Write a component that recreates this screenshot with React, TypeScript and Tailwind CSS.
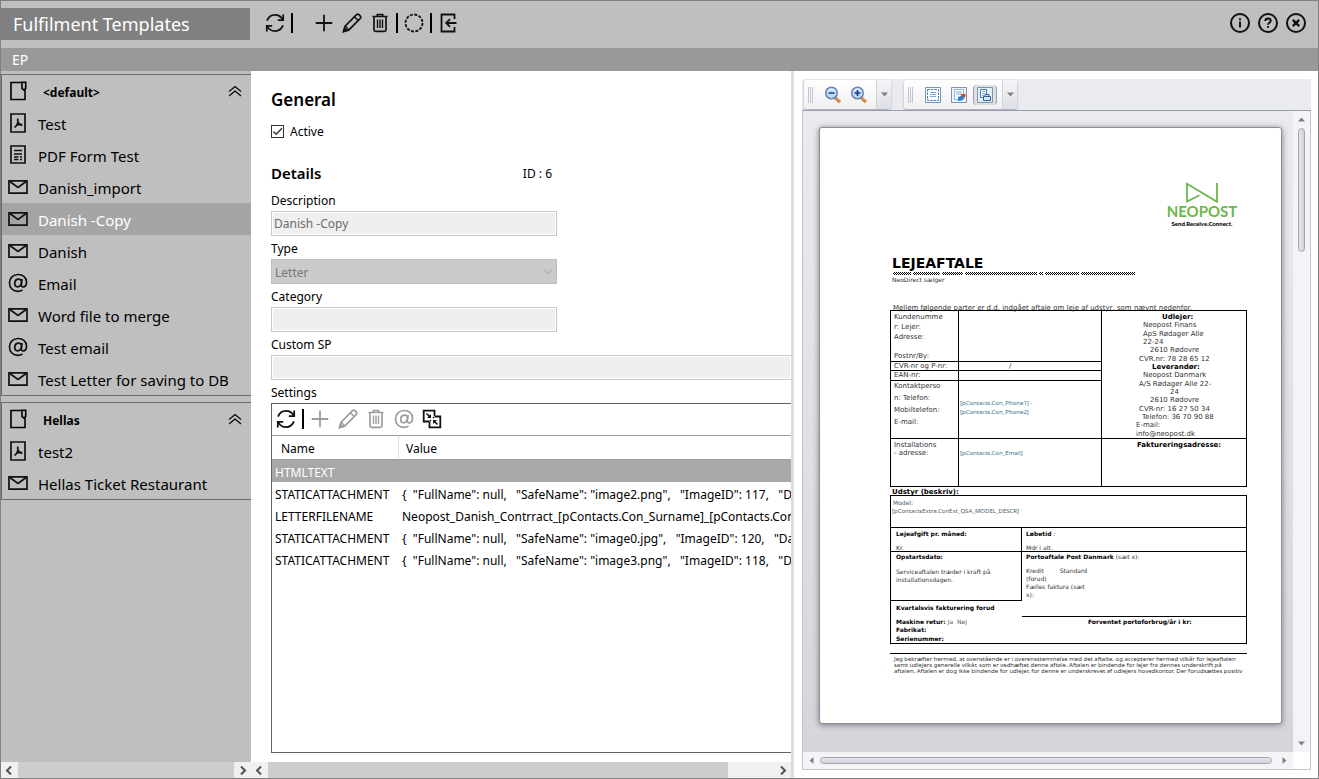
import React from "react";

type IconProps = { className?: string };

const svgBase = {
  fill: "none",
  stroke: "currentColor",
  strokeWidth: 1.8,
  "aria-hidden": true,
} as const;

function RefreshIcon() {
  return (
    <svg width="20" height="20" viewBox="0 0 20 20" {...svgBase}>
      <path d="M2 7.6C3.6 3.6 6.6 1.9 10 1.9c3.4 0 6.2 1.900 7.900 5" />
      <path d="M18.200 1.600v5.600h-5.400" />
      <path d="M18 12.400c-1.600 4-4.600 5.700-8 5.700-3.400 0-6.200-1.900-7.900-5" />
      <path d="M1.800 18.400v-5.600h5.400" />
    </svg>
  );
}

function PlusIcon() {
  return (
    <svg width="20" height="20" viewBox="0 0 20 20" {...svgBase}>
      <path d="M10 1.700v16.600M1.700 10h16.600" />
    </svg>
  );
}

function PencilIcon() {
  return (
    <svg width="20" height="20" viewBox="0 0 20 20" {...svgBase} strokeWidth={1.700}>
      <path d="M1.600 18.400l1.500-5.300L14.300 1.900c1-.9 2.100-.8 2.900 0l.9.9c.8.8.9 1.900 0 2.900L6.900 16.900z" />
      <path d="M12.400 3.800l3.800 3.800M3.100 13.100l3.800 3.800" strokeWidth={1.400} />
      <path d="M1.600 18.400l.9-3 2.100 2.100z" fill="currentColor" />
    </svg>
  );
}

function TrashIcon() {
  return (
    <svg width="20" height="20" viewBox="0 0 20 20" {...svgBase} strokeWidth={1.700}>
      <path d="M2.500 3.500h15M7.300 3.300V1.500h5.400v1.800M4 3.500v13.200c0 1 .6 1.600 1.600 1.600h8.800c1 0 1.600-.6 1.600-1.600V3.500" />
      <path d="M7.500 6.500v8.500M10 6.500v8.500M12.500 6.500v8.500" strokeWidth={1.400} />
    </svg>
  );
}

function DashedCircleIcon() {
  return (
    <svg width="20" height="20" viewBox="0 0 20 20" {...svgBase}>
      <circle cx="10" cy="10" r="8.500" strokeDasharray="3 1.450" />
    </svg>
  );
}

function ExitIcon() {
  return (
    <svg width="20" height="20" viewBox="0 0 20 20" {...svgBase}>
      <path d="M16.500 6V1.500h-13v17h13V14" />
      <path d="M18.500 10H8.500M12 6.200L8.200 10l3.800 3.800" />
    </svg>
  );
}

function AtIcon() {
  return (
    <svg width="20" height="20" viewBox="0 0 20 20" {...svgBase} strokeWidth={1.700}>
      <path d="M14.500 16.900c-1.300.9-2.800 1.400-4.600 1.400-5 0-8.400-3.400-8.400-8.300 0-4.900 3.600-8.500 8.700-8.500 4.800 0 8.300 3 8.300 7.500 0 3.100-1.500 4.900-3.400 4.900-1.300 0-2-.8-1.800-2.300l.8-5.600" />
      <path d="M13.600 8.800c-.3-1.700-1.300-2.600-2.900-2.600-2.400 0-4 1.900-4 4.400 0 2 1 3.200 2.700 3.200 2 0 3.700-1.600 4.100-4.100" />
    </svg>
  );
}

function MergeIcon() {
  return (
    <svg width="20" height="20" viewBox="0 0 20 20" {...svgBase}>
      <path d="M7.500 12.500H1.700V1.700h10.800v5M12.500 7.500h5.800v10.800H7.500v-5.800" />
      <path d="M4.500 4.500l3.300 3.300M15.500 15.500l-3.600-3.600" strokeWidth={1.500} />
      <path d="M12 8l-1 1M9 11l-1 1" strokeWidth={1.200} />
      <path d="M9 5v4H5zM11 15v-4h4z" fill="currentColor" stroke="none" />
    </svg>
  );
}

function InfoIcon() {
  return (
    <svg width="20" height="20" viewBox="0 0 20 20" {...svgBase} strokeWidth={2}>
      <circle cx="10" cy="10" r="9" />
      <path d="M10 8.500v6M10 5.300v2" />
    </svg>
  );
}

function HelpIcon() {
  return (
    <svg width="20" height="20" viewBox="0 0 20 20" {...svgBase} strokeWidth={2}>
      <circle cx="10" cy="10" r="9" />
      <path d="M7.300 8c.1-1.600 1.200-2.500 2.700-2.500 1.600 0 2.700.9 2.700 2.200 0 2-2.700 2-2.700 4.100M10 12.900v1.900" />
    </svg>
  );
}

function CloseIcon() {
  return (
    <svg width="20" height="20" viewBox="0 0 20 20" {...svgBase} strokeWidth={2}>
      <circle cx="10" cy="10" r="9" />
      <path d="M6.800 6.800l6.400 6.400M13.200 6.800l-6.400 6.400" strokeWidth={2.400} />
    </svg>
  );
}

function FolderIcon() {
  return (
    <svg width="20" height="20" viewBox="0 0 20 20" {...svgBase} strokeWidth={1.600}>
      <path d="M14 1.500H3v17h14V9M14 1.200h3.700v6.500L15.900 9 14 7.700z" />
    </svg>
  );
}

function PdfIcon() {
  return (
    <svg width="20" height="20" viewBox="0 0 20 20" {...svgBase} strokeWidth={1.700}>
      <path d="M3 1h14v18H3z" />
      <path d="M9.600 5.500c.6 2.700.6 3.700-.5 5.900-.9 1.800-1.800 2.800-2.700 2.900M9.700 8.500c1 2.300 2.400 3.500 4.600 3.900M8.400 12.200c2-.8 3.800-1 5.800-.6" />
    </svg>
  );
}

function FormIcon() {
  return (
    <svg width="20" height="20" viewBox="0 0 20 20" {...svgBase} strokeWidth={1.700}>
      <path d="M3 1h14v17H3z" />
      <path d="M6 5.500h8M6 9h8M6 12h4.500M12 12h2M6 14.500h4.500M12 14.500h2" strokeWidth={1.400} />
    </svg>
  );
}

function MailIcon() {
  return (
    <svg width="20" height="20" viewBox="0 0 20 20" {...svgBase} strokeWidth={1.700}>
      <path d="M1 3.800h18v12.400H1z" />
      <path d="M1.500 4.200L10 10.500l8.500-6.300" />
    </svg>
  );
}

function CollapseIcon() {
  return (
    <svg width="14" height="12" viewBox="0 0 14 12" {...svgBase} strokeWidth={1.100}>
      <path d="M1 6.500l6-5 6 5M1 11l6-5 6 5" />
    </svg>
  );
}

function MagnifierIcon({ plus }: { plus?: boolean }) {
  return (
    <svg width="18" height="18" viewBox="0 0 18 18" fill="none" aria-hidden>
      <path d="M11 11.500l5 4.700" stroke="#c9772b" strokeWidth="3" />
      <path d="M11.500 11.500l4.500 4.200" stroke="#f2b466" strokeWidth="1" />
      <circle cx="7.500" cy="7" r="5.800" fill="#b9dcf8" stroke="#6d83b3" strokeWidth="1.500" />
      <path d="M4 5.500a4 4 0 0 1 7 0" stroke="#eaf6ff" strokeWidth="1.200" />
      <path d={plus ? "M4.500 7h6M7.500 4v6" : "M4.500 7h6"} stroke="#1d3c8f" strokeWidth="1.700" />
    </svg>
  );
}

function PageFrameIcon() {
  return (
    <svg width="16" height="16" viewBox="0 0 16 16" fill="none" aria-hidden>
      <path d="M.5.500h15v15H.5z" fill="#fff" stroke="#7f93ad" />
      <path d="M2.500 2.500h11v11h-11z" stroke="#3d7ccc" strokeDasharray="2.500 1" />
      <path d="M5 5.500h6M5 7.500h6M5 9.500h6" stroke="#7fa8dc" />
    </svg>
  );
}

function PageColorIcon() {
  return (
    <svg width="16" height="16" viewBox="0 0 16 16" fill="none" aria-hidden>
      <path d="M.5.500h15v15H.5z" fill="#eef6fd" stroke="#7f93ad" />
      <path d="M3.500 2.500h9v10h-9z" fill="#fff" stroke="#8db7e4" />
      <path d="M5 5h6M5 7h5" stroke="#7fa8dc" />
      <path d="M7 10l4-1.500 3 1-3 4-4 .5z" fill="#2f7fd0" />
      <path d="M9 7.500l4-1 2 1.500-1.500 3-2.500-2z" fill="#d0492a" />
    </svg>
  );
}

function PagePrintIcon() {
  return (
    <svg width="16" height="16" viewBox="0 0 16 16" fill="none" aria-hidden>
      <path d="M.5.500h15v15H.5z" fill="#e6eef6" stroke="#7f93ad" />
      <path d="M3.500 2.500h6v8h-6z" fill="#fff" stroke="#3d7ccc" />
      <path d="M5 4.500h3M5 6.500h3M5 8.500h2" stroke="#7fa8dc" />
      <path d="M6.500 9.500h7v4h-7zM8 7.500h4v2H8z" fill="#dbe9f7" stroke="#2e5f9e" />
    </svg>
  );
}

function Logo() {
  return (
    <div className="flex w-[80px] flex-col items-center">
      <svg width="34" height="22" viewBox="0 0 34 22" fill="none" stroke="#6cb74b" strokeWidth="1.800" role="img" aria-label="Neopost logo">
        <path d="M14.500 14.200L2 20.500V2.800l30 18V2" />
      </svg>
      <div className="font-['Lato',sans-serif] text-[15px] leading-[16px] font-bold text-[#6cb74b]">NEOPOST</div>
      <div className="font-['Lato',sans-serif] text-[6px] leading-[9px] font-black text-black">Send.Receive.Connect.</div>
    </div>
  );
}

function IconButton({ label, disabled, children }: { label: string; disabled?: boolean; children: React.ReactNode }) {
  return (
    <button
      type="button"
      aria-label={label}
      disabled={disabled}
      className="flex h-7 w-7 shrink-0 items-center justify-center text-[#111] disabled:text-[#9d9d9d]"
    >
      {children}
    </button>
  );
}

function Separator() {
  return <span className="mx-0.5 h-5 w-0.5 shrink-0 bg-black" />;
}

type Kind = "pdf" | "form" | "mail" | "email";

const kindIcons: Record<Kind, () => React.JSX.Element> = {
  pdf: PdfIcon,
  form: FormIcon,
  mail: MailIcon,
  email: AtIcon,
};

const groups: { name: string; items: { kind: Kind; name: string; selected?: boolean }[] }[] = [
  {
    name: "<default>",
    items: [
      { kind: "pdf", name: "Test" },
      { kind: "form", name: "PDF Form Test" },
      { kind: "mail", name: "Danish_import" },
      { kind: "mail", name: "Danish -Copy", selected: true },
      { kind: "mail", name: "Danish" },
      { kind: "email", name: "Email" },
      { kind: "mail", name: "Word file to merge" },
      { kind: "email", name: "Test email" },
      { kind: "mail", name: "Test Letter for saving to DB" },
    ],
  },
  {
    name: "Hellas",
    items: [
      { kind: "pdf", name: "test2" },
      { kind: "mail", name: "Hellas Ticket Restaurant" },
    ],
  },
];

const settings = [
  { name: "HTMLTEXT", value: "", selected: true },
  { name: "STATICATTACHMENT", value: '{  "FullName": null,   "SafeName": "image2.png",   "ImageID": 117,   "Data": null }' },
  { name: "LETTERFILENAME", value: "Neopost_Danish_Contrract_[pContacts.Con_Surname]_[pContacts.Con_ID]" },
  { name: "STATICATTACHMENT", value: '{  "FullName": null,   "SafeName": "image0.jpg",   "ImageID": 120,   "Data": null }' },
  { name: "STATICATTACHMENT", value: '{  "FullName": null,   "SafeName": "image3.png",   "ImageID": 118,   "Data": null }' },
];

function Sidebar() {
  return (
    <nav className="flex min-h-0 flex-1 flex-col gap-1.5 overflow-hidden bg-[#bfbfbf] pt-[3px]">
      {groups.map((group) => (
        <section key={group.name} className="border border-r-0 border-[#6b6b6b]">
          <button type="button" className="flex h-8 w-full items-center pr-[9px] pl-1.5 text-left">
            <FolderIcon />
            <span className="ml-[15px] flex-1 pt-[3px] text-[12px] font-bold">{group.name}</span>
            <CollapseIcon />
          </button>
          {group.items.map((item) => {
            const Icon = kindIcons[item.kind];
            return (
              <button
                key={item.name}
                type="button"
                className={
                  item.selected
                    ? "flex h-8 w-full items-center gap-2.5 bg-[#a5a5a5] pl-1.5 text-left text-[15px] text-white"
                    : "flex h-8 w-full items-center gap-2.5 pl-1.5 text-left text-[15px] text-black"
                }
              >
                <span className="text-[#111]">
                  <Icon />
                </span>
                <span className="pt-[3px] whitespace-nowrap">{item.name}</span>
              </button>
            );
          })}
        </section>
      ))}
    </nav>
  );
}

function ChevronSmall({ left }: { left?: boolean }) {
  return (
    <svg width="17" height="9" viewBox="0 0 17 9" fill="none" stroke="#505050" strokeWidth="2" aria-hidden>
      <path d={left ? "M10 .5l-4 4 4 4" : "M7 .5l4 4-4 4"} />
    </svg>
  );
}

function FlatScrollbar({ thumb }: { thumb: string }) {
  return (
    <div className="flex h-4 shrink-0 items-center bg-[#f0f0f0]">
      <ChevronSmall left />
      <div className="flex h-full flex-1">
        <div className={thumb} />
      </div>
      <ChevronSmall />
    </div>
  );
}

const labelClass = "flex h-[23px] items-center pt-0.5";
const inputClass =
  "block h-[25px] border border-[#c9c9c9] bg-[#efefef] px-0.5 text-[12px] text-[#6d6d6d] shadow-[inset_0_0_0_1px_#fff] outline-none";

function TemplateForm() {
  return (
    <div className="flex min-h-0 flex-1 flex-col overflow-hidden bg-white pt-3.5 pb-[9px] pl-5 text-[12px]">
      <h2 className="flex h-7 items-center pt-0.5 text-[17px] font-semibold">General</h2>
      <label className="mt-2 flex h-5 items-center gap-1.5">
        <span className="relative h-[13px] w-[13px]">
          <input type="checkbox" defaultChecked className="peer block h-[13px] w-[13px] appearance-none border border-[#333] bg-white" />
          <svg className="pointer-events-none absolute inset-0 hidden peer-checked:block" width="13" height="13" viewBox="0 0 13 13" fill="none" stroke="#333" strokeWidth="1.400">
            <path d="M2.500 6.500l2.700 2.800L11 3.200" />
          </svg>
        </span>
        <span className="pt-0.5">Active</span>
      </label>
      <div className="mt-5 flex h-6 w-[286px] shrink-0 items-center justify-between pr-[5px]">
        <h2 className="text-[15px] font-semibold">Details</h2>
        <span className="pt-0.5">ID : 6</span>
      </div>
      <div className="mt-[3px] shrink-0">
        <label htmlFor="description" className={labelClass}>Description</label>
        <input id="description" readOnly defaultValue="Danish -Copy" className={`${inputClass} w-[286px]`} />
        <label htmlFor="type" className={labelClass}>Type</label>
        <div className="relative w-[286px]">
          <select id="type" disabled className="block h-[25px] w-full appearance-none border border-[#bdbdbd] bg-[#cbcbcb] px-[3px] pt-0.5 text-[12px] text-[#777] opacity-100">
            <option>Letter</option>
          </select>
          <svg className="pointer-events-none absolute top-2.5 right-1" width="10" height="6" viewBox="0 0 10 6" fill="none" stroke="#9b9b9b">
            <path d="M1 .5l4 4 4-4" />
          </svg>
        </div>
        <label htmlFor="category" className={labelClass}>Category</label>
        <input id="category" readOnly className={`${inputClass} w-[286px]`} />
        <label htmlFor="custom-sp" className={labelClass}>Custom SP</label>
        <input id="custom-sp" readOnly className={`${inputClass} w-full border-r-0`} />
        <div className={labelClass}>Settings</div>
      </div>
      <div className="flex min-h-0 flex-1 flex-col overflow-hidden border border-r-0 border-[#646464]">
        <div className="flex h-[31px] shrink-0 items-center pb-px">
          <IconButton label="Refresh settings"><RefreshIcon /></IconButton>
          <Separator />
          <IconButton label="Add setting" disabled><PlusIcon /></IconButton>
          <IconButton label="Edit setting" disabled><PencilIcon /></IconButton>
          <IconButton label="Delete setting" disabled><TrashIcon /></IconButton>
          <IconButton label="Email setting" disabled><AtIcon /></IconButton>
          <IconButton label="Merge"><MergeIcon /></IconButton>
        </div>
        <table className="w-full table-fixed border-separate border-spacing-0 text-left whitespace-pre">
          <colgroup>
            <col className="w-[127px]" />
            <col />
          </colgroup>
          <thead>
            <tr className="h-[25px]">
              <th className="border-y border-r border-y-[#999] border-r-[#dcdcdc] pt-0.5 pl-[9px] font-normal">Name</th>
              <th className="border-y border-[#999] pt-0.5 pl-[7px] font-normal">Value</th>
            </tr>
          </thead>
          <tbody>
            {settings.map((row, i) => (
              <tr key={i} className={row.selected ? "h-[22px] bg-[#a8a8a8] text-white" : "h-[22px]"}>
                <td className="pt-1 pl-[3px] leading-4">{row.name}</td>
                <td className="overflow-hidden pt-1 pl-[3px] leading-4">{row.value}</td>
              </tr>
            ))}
          </tbody>
        </table>
      </div>
    </div>
  );
}

function Triangle({ className }: IconProps) {
  return (
    <svg className={className} width="7" height="5" viewBox="0 0 7 5" fill="#7d8090" aria-hidden>
      <path d="M0 .5h7L3.500 4.500z" />
    </svg>
  );
}

function ToolGroup({ children }: { children: React.ReactNode }) {
  return (
    <div className="flex h-[29px] overflow-hidden rounded-[3px] bg-linear-to-b from-white to-[#f0f0f4] shadow-[0_1px_2px_#9a9cab]">
      <div className="ml-1 flex items-center gap-px">
        <span className="h-4 w-px bg-[#c4c6ce]" />
        <span className="h-4 w-px bg-[#c4c6ce]" />
        <span className="h-4 w-px bg-[#c4c6ce]" />
      </div>
      {children}
      <button type="button" aria-label="More options" className="flex w-[15px] items-center justify-center border-l border-[#cfd0d8] bg-linear-to-b from-[#f6f6f9] to-[#dedfe6]">
        <Triangle />
      </button>
    </div>
  );
}

function ToolButton({ label, pressed, children }: { label: string; pressed?: boolean; children: React.ReactNode }) {
  return (
    <button
      type="button"
      aria-label={label}
      className={
        pressed
          ? "flex w-6 items-center justify-center self-center rounded-sm border-x border-[#9b9dab] bg-[#dfe0e6] py-0.5"
          : "flex w-6 items-center justify-center self-center py-0.5"
      }
    >
      {children}
    </button>
  );
}

const supplierLines: { text: string; style: string }[] = [
  { text: "Udlejer:", style: "pl-[60px] font-bold text-black" },
  { text: "Neopost Finans", style: "pl-[41px]" },
  { text: "ApS Rødager Alle", style: "pl-[41px]" },
  { text: "22-24", style: "pl-[41px]" },
  { text: "2610 Rødovre", style: "pl-[48px]" },
  { text: "CVR.nr: 78 28 65 12", style: "pl-[37px]" },
  { text: "Leverandør:", style: "pl-[50px] font-bold text-black" },
  { text: "Neopost Danmark", style: "pl-[41px]" },
  { text: "A/S Rødager Alle 22-", style: "pl-[37px]" },
  { text: "24", style: "pl-[68px]" },
  { text: "2610 Rødovre", style: "pl-[48px]" },
  { text: "CVR-nr: 16 27 50 34", style: "pl-[37px]" },
  { text: "Telefon: 36 70 90 88", style: "pl-[40px]" },
  { text: "E-mail:", style: "pl-[34px]" },
  { text: "info@neopost.dk", style: "pl-[34px]" },
];

const ruleSegments = ["w-[18px]", "w-[27px]", "w-[21px]", "w-[72px]", "w-1", "w-[34px]", "w-[54px]"];

const cell = "border border-black p-0 pl-[3px] align-top";
const fieldCell = "border border-black p-0 pl-px align-top font-['Noto_Sans',sans-serif] text-[6px] text-[#356f8c]";

function DocumentPage() {
  return (
    <article className="h-[597px] w-[463px] shrink-0 rounded-[3px] border border-[#8d8d92] bg-white pr-[34px] pl-[70px] font-['DejaVu_Sans',sans-serif] text-[7px] leading-[8px] text-[#333] shadow-[0_1px_6px_#777a85]">
      <div className="flex h-[127px] justify-end pt-[53px] pr-[5px]">
        <Logo />
      </div>
      <h1 className="pl-0.5 text-[14px] leading-[16px] font-bold text-black">LEJEAFTALE</h1>
      <div className="mt-px flex gap-[2px] pl-[3px]">
        {ruleSegments.map((w, i) => (
          <span key={i} className={`h-[3px] bg-[repeating-conic-gradient(#000_0_25%,#fff_0_50%)] bg-[length:2px_2px] ${w}`} />
        ))}
      </div>
      <p className="mt-px pl-0.5 text-[6px]">NeoDirect sælger</p>
      <p className="mt-5 h-[6px] overflow-visible pl-[3px] whitespace-nowrap">
        Mellem følgende parter er d.d. indgået aftale om leje af udstyr, som nævnt nedenfor.
      </p>
      <table className="w-full table-fixed border-collapse text-left">
        <colgroup>
          <col className="w-[68px]" />
          <col className="w-[143px]" />
          <col />
        </colgroup>
        <tbody>
          <tr className="h-[51px]">
            <td className={cell}>
              <div className="pt-0.5 leading-[9px]">Kundenumme</div>
              <div className="leading-[10px]">r: Lejer:</div>
              <div className="leading-[10px]">Adresse:</div>
              <div className="pt-[9px] leading-[10px]">Postnr/By:</div>
            </td>
            <td className={cell} />
            <td rowSpan={4} className="border border-black p-0 align-top">
              <div className="flex h-[127px] flex-col justify-between pt-0.5 whitespace-nowrap">
                {supplierLines.map((line, i) => (
                  <span key={i} className={line.style}>{line.text}</span>
                ))}
              </div>
            </td>
          </tr>
          <tr className="h-[9px]">
            <td className={`${cell} whitespace-nowrap`}>CVR-nr og P-nr:</td>
            <td className="border border-black p-0 pl-[50px]">/</td>
          </tr>
          <tr className="h-[10px]">
            <td className={cell}>EAN-nr:</td>
            <td className={cell} />
          </tr>
          <tr className="h-[58px]">
            <td className={`${cell} leading-[12px] whitespace-nowrap`}>
              <div className="leading-[10px]">Kontaktperso</div>
              <div className="pt-px">n: Telefon:</div>
              <div>Mobiltelefon:</div>
              <div>E-mail:</div>
            </td>
            <td className={`${fieldCell} pt-[18px] leading-[9px]`}>
              [pContacts.Con_Phone1] -<br />[pContacts.Con_Phone2]
            </td>
          </tr>
          <tr className="h-[48px]">
            <td className={`${cell} pt-[2px] whitespace-nowrap`}>Installations<br />- adresse:</td>
            <td className={`${fieldCell} pt-[10px]`}>[pContacts.Con_Email]</td>
            <td className="border border-black p-0 pt-[2px] pl-[35px] align-top font-bold text-black">Faktureringsadresse:</td>
          </tr>
        </tbody>
      </table>
      <div className="h-2 pt-px pl-0.5 font-bold text-black">Udstyr (beskriv):</div>
      <div className="border border-black text-[6px]">
        <div className="h-[32px] border-b border-black pt-[3px] pl-px text-[#4b5b66]">
          <div className="pl-px">Model:</div>
          <div className="font-['Noto_Sans',sans-serif]">[pContactsExtra.ConExt_QSA_MODEL_DESCR]</div>
        </div>
        <div className="flex h-[24px] border-b border-black">
          <div className="w-[131px] border-r border-black pt-[2px] pl-[5px]">
            <b className="text-black">Lejeafgift pr. måned:</b>
            <div className="pt-[6px]">Kr.</div>
          </div>
          <div className="flex-1 pt-[2px] pl-1">
            <b className="text-black">Løbetid</b> :
            <div className="pt-[6px]">Mdr i alt.</div>
          </div>
        </div>
        <div className="flex h-[91px]">
          <div className="w-[131px] shrink-0 whitespace-nowrap">
            <div className="h-[49px] border-r border-b border-black pt-px pl-[5px]">
              <b className="text-black">Opstartsdato:</b>
              <div className="pt-[7px]">Serviceaftalen træder i kraft på<br />installationsdagen.</div>
            </div>
            <div className="pt-[3px] pl-[5px] font-bold text-black">
              <div>Kvartalsvis fakturering forud</div>
              <div className="pt-[6px]">Maskine retur: <span className="font-normal text-[#555]">Ja&nbsp; Nej</span></div>
              <div>Fabrikat:</div>
              <div className="pt-px">Serienummer:</div>
            </div>
          </div>
          <div className="flex-1">
            <div className="h-[65px] border-b border-black pt-px pl-1">
              <b className="text-black">Portoaftale Post Danmark</b> (sæt x):
              <div className="flex gap-4 pt-[6px]">
                <span>Kredit</span>
                <span>Standard</span>
              </div>
              <div>(forud)</div>
              <div>Fælles faktura (sæt</div>
              <div>x):</div>
            </div>
            <div className="pt-px pl-[66px] font-bold whitespace-nowrap text-black">Forventet portoforbrug/år i kr:</div>
          </div>
        </div>
      </div>
      <p className="mt-[9px] border-t border-black pt-[2px] pl-1 font-['Noto_Sans',sans-serif] text-[6px] leading-[6px] whitespace-nowrap">
        Jeg bekræfter hermed, at ovenstående er i overensstemmelse med det aftalte, og accepterer hermed vilkår for lejeaftalen<br />
        samt udlejers generelle vilkår, som er vedhæftet denne aftale. Aftalen er bindende for lejer fra dennes underskrift på<br />
        aftalen. Aftalen er dog ikke bindende for udlejer, for denne er underskrevet af udlejers hovedkontor. Der forudsættes positiv
      </p>
    </article>
  );
}

function DocumentViewer() {
  return (
    <section className="flex min-w-0 flex-1 flex-col bg-white pt-2 pr-[7px] pb-2 pl-2">
      <div className="flex h-8 shrink-0 gap-[13px] border-b border-[#9a9cb0] bg-[#eaebef] pt-px pl-0.5">
        <ToolGroup>
          <div className="ml-2 flex gap-0.5 pr-[5px]">
            <ToolButton label="Zoom out"><MagnifierIcon /></ToolButton>
            <ToolButton label="Zoom in"><MagnifierIcon plus /></ToolButton>
          </div>
        </ToolGroup>
        <ToolGroup>
          <div className="ml-2 flex gap-0.5 pr-[5px]">
            <ToolButton label="Page layout"><PageFrameIcon /></ToolButton>
            <ToolButton label="Page colour"><PageColorIcon /></ToolButton>
            <ToolButton label="Print layout" pressed><PagePrintIcon /></ToolButton>
          </div>
        </ToolGroup>
      </div>
      <div className="flex min-h-0 flex-1 flex-col border-x border-b border-[#c3c5d0]">
        <div className="flex min-h-0 flex-1">
          <div className="flex min-w-0 flex-1 items-start overflow-hidden bg-linear-to-b from-[#eaebee] to-[#d5d6dc] pt-4 pl-4">
            <DocumentPage />
          </div>
          <div className="flex w-[17px] flex-col items-center bg-[#f4f4f7] py-1.5">
            <Triangle className="rotate-180" />
            <div className="mt-1.5 h-[124px] w-[7px] rounded-full border border-[#a2a5b3] bg-linear-to-r from-[#e6e7ec] to-[#cfd1d9]" />
            <div className="flex-1" />
            <Triangle />
          </div>
        </div>
        <div className="flex h-[17px] shrink-0">
          <div className="flex min-w-0 flex-1 items-center bg-[#f4f4f7] px-[5px]">
            <Triangle className="rotate-90" />
            <div className="mx-[5px] h-[7px] flex-1 rounded-full border border-[#a2a5b3] bg-linear-to-b from-[#e6e7ec] to-[#cfd1d9]" />
            <Triangle className="ml-1 -rotate-90" />
          </div>
          <div className="w-[17px]" />
        </div>
      </div>
    </section>
  );
}

export default function App() {
  return (
    <div className="flex h-screen flex-col overflow-hidden border border-[#808080] bg-white font-['Noto_Sans',sans-serif] text-black">
      <header className="flex h-[47px] shrink-0 items-center bg-[#bfbfbf] pr-2 pb-[3px]">
        <h1 className="mt-px flex h-8 w-[249px] shrink-0 items-center bg-[#808080] pt-0.5 pl-3 text-[18px] text-white">Fulfilment Templates</h1>
        <div className="ml-[11px] flex items-center">
          <IconButton label="Refresh"><RefreshIcon /></IconButton>
          <Separator />
          <div className="ml-[15px] flex">
            <IconButton label="Add"><PlusIcon /></IconButton>
            <IconButton label="Edit"><PencilIcon /></IconButton>
            <IconButton label="Delete"><TrashIcon /></IconButton>
          </div>
          <Separator />
          <IconButton label="Select"><DashedCircleIcon /></IconButton>
          <Separator />
          <IconButton label="Import"><ExitIcon /></IconButton>
        </div>
        <div className="ml-auto flex">
          <IconButton label="Information"><InfoIcon /></IconButton>
          <IconButton label="Help"><HelpIcon /></IconButton>
          <IconButton label="Close"><CloseIcon /></IconButton>
        </div>
      </header>
      <div className="flex h-[23px] shrink-0 items-center bg-[#999] pl-[11px] text-[14px] text-white">EP</div>
      <main className="flex min-h-0 flex-1">
        <div className="flex w-[250px] shrink-0 flex-col">
          <Sidebar />
          <FlatScrollbar thumb="w-full bg-[#cdcdcd]" />
        </div>
        <div className="flex w-[540px] shrink-0 flex-col">
          <TemplateForm />
          <FlatScrollbar thumb="w-[91%] bg-[#cdcdcd]" />
        </div>
        <div className="w-[3px] shrink-0 bg-[#dcdcdc]" />
        <DocumentViewer />
      </main>
    </div>
  );
}
